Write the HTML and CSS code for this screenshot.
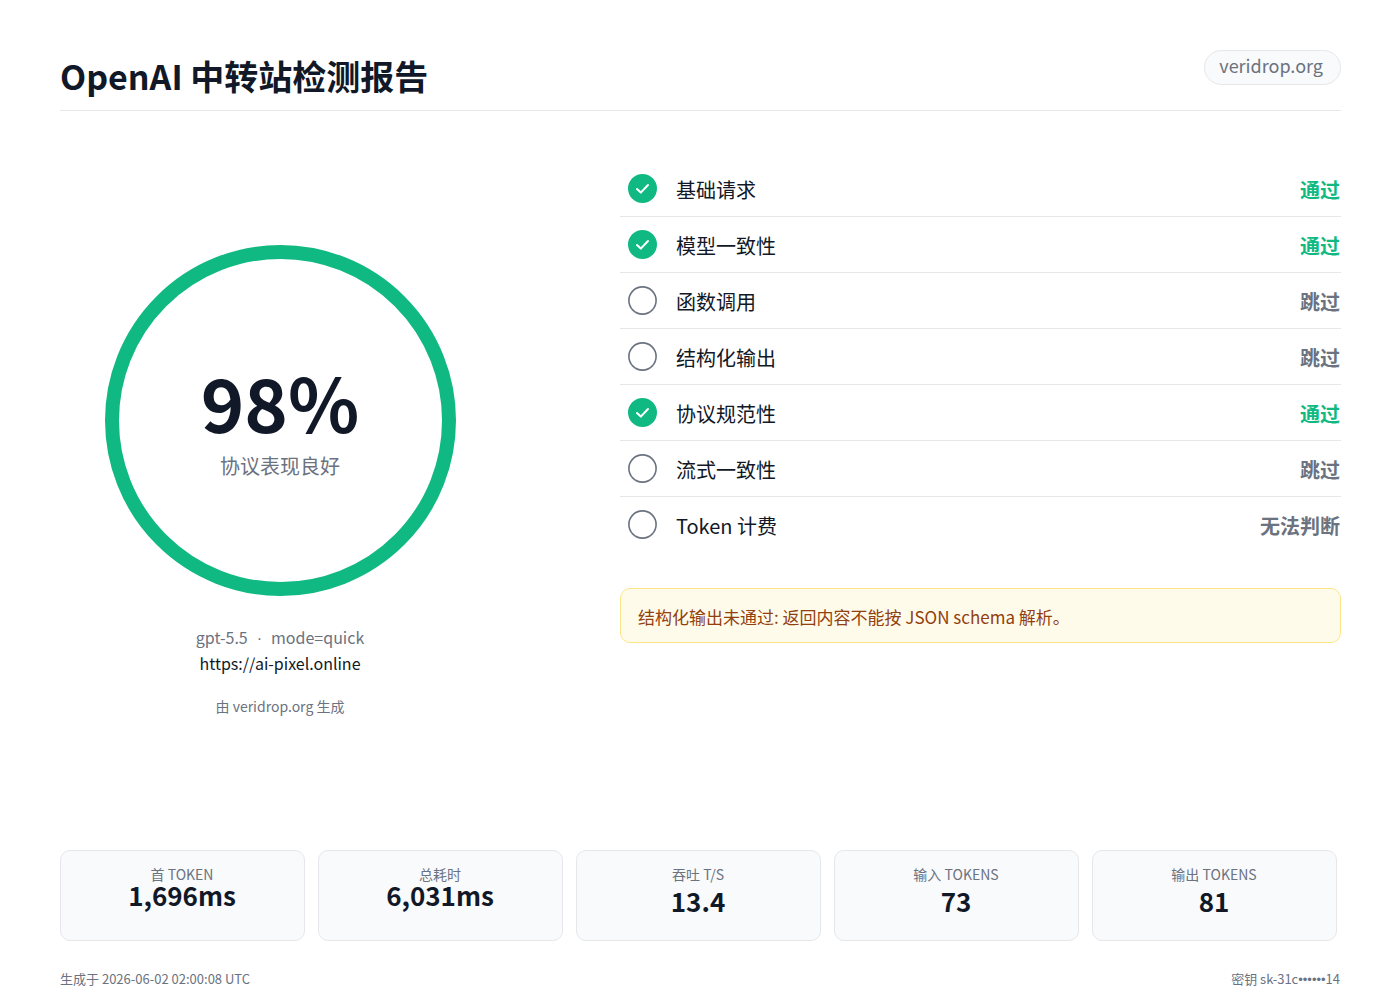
FILE: index.html
```html
<!DOCTYPE html>
<html>
<head>
    <title>OpenAI 中转站检测报告</title>
    <meta charset="utf-8">
    <link rel="stylesheet" href="styles.css">
</head>
<body>
    <div class="header">
        <h1>OpenAI 中转站检测报告</h1>
        <div class="brand">veridrop.org</div>
    </div>

    <div class="main">
        <div class="score-col">
            <div class="ring">
                <svg width="352" height="352" viewBox="0 0 352 352">
                    <circle cx="176.5" cy="175.5" r="168.5" fill="none" stroke="#10b981" stroke-width="14"/>
                </svg>
                <div class="ring-text">
                    <div class="score">98%</div>
                    <div class="score-label">协议表现良好</div>
                </div>
            </div>
            <div class="meta">gpt-5.5<span class="sep">·</span>mode=quick</div>
            <div class="url">https://ai-pixel.online</div>
            <div class="by">由 veridrop.org 生成</div>
        </div>

        <div class="check-col">
            <div class="check">
                <svg class="icon" viewBox="0 0 29 29"><circle cx="14.5" cy="14.5" r="14.5" fill="#10b981"/><path d="M9 15l3.8 3.6 7.2-7.6" fill="none" stroke="#fff" stroke-width="2" stroke-linecap="round" stroke-linejoin="round"/></svg>
                <span class="check-name">基础请求</span>
                <span class="status pass">通过</span>
            </div>
            <div class="check">
                <svg class="icon" viewBox="0 0 29 29"><circle cx="14.5" cy="14.5" r="14.5" fill="#10b981"/><path d="M9 15l3.8 3.6 7.2-7.6" fill="none" stroke="#fff" stroke-width="2" stroke-linecap="round" stroke-linejoin="round"/></svg>
                <span class="check-name">模型一致性</span>
                <span class="status pass">通过</span>
            </div>
            <div class="check">
                <svg class="icon" viewBox="0 0 29 29"><circle cx="14.5" cy="14.5" r="13.6" fill="none" stroke="#6b7280" stroke-width="1.6"/></svg>
                <span class="check-name">函数调用</span>
                <span class="status">跳过</span>
            </div>
            <div class="check">
                <svg class="icon" viewBox="0 0 29 29"><circle cx="14.5" cy="14.5" r="13.6" fill="none" stroke="#6b7280" stroke-width="1.6"/></svg>
                <span class="check-name">结构化输出</span>
                <span class="status">跳过</span>
            </div>
            <div class="check">
                <svg class="icon" viewBox="0 0 29 29"><circle cx="14.5" cy="14.5" r="14.5" fill="#10b981"/><path d="M9 15l3.8 3.6 7.2-7.6" fill="none" stroke="#fff" stroke-width="2" stroke-linecap="round" stroke-linejoin="round"/></svg>
                <span class="check-name">协议规范性</span>
                <span class="status pass">通过</span>
            </div>
            <div class="check">
                <svg class="icon" viewBox="0 0 29 29"><circle cx="14.5" cy="14.5" r="13.6" fill="none" stroke="#6b7280" stroke-width="1.6"/></svg>
                <span class="check-name">流式一致性</span>
                <span class="status">跳过</span>
            </div>
            <div class="check last">
                <svg class="icon" viewBox="0 0 29 29"><circle cx="14.5" cy="14.5" r="13.6" fill="none" stroke="#6b7280" stroke-width="1.6"/></svg>
                <span class="check-name">Token 计费</span>
                <span class="status">无法判断</span>
            </div>
            <div class="notice">结构化输出未通过: 返回内容不能按 JSON schema 解析。</div>
        </div>
    </div>

    <div class="stats">
        <div class="stat">
            <div class="stat-label">首 TOKEN</div>
            <div class="stat-value tight">1,696ms</div>
        </div>
        <div class="stat">
            <div class="stat-label">总耗时</div>
            <div class="stat-value tight">6,031ms</div>
        </div>
        <div class="stat">
            <div class="stat-label">吞吐 T/S</div>
            <div class="stat-value">13.4</div>
        </div>
        <div class="stat">
            <div class="stat-label">输入 TOKENS</div>
            <div class="stat-value">73</div>
        </div>
        <div class="stat">
            <div class="stat-label">输出 TOKENS</div>
            <div class="stat-value">81</div>
        </div>
    </div>

    <div class="footer">
        <span>生成于 2026-06-02 02:00:08 UTC</span>
        <span>密钥 sk-31c<span class="dots">••••••</span>14</span>
    </div>
</body>
</html>
```

FILE: styles.css
```css
html, body {
    margin: 0;
    height: 1000px;
    overflow: hidden;
}
body {
    font-family: "Noto Sans CJK SC", "Noto Sans", sans-serif;
    background: #fff;
    color: #111827;
    padding: 50px 59px 0 60px;
    box-sizing: border-box;
}
.header {
    display: flex;
    justify-content: space-between;
    align-items: flex-start;
    height: 60px;
    border-bottom: 1px solid #e5e7eb;
}
.header h1 {
    margin: 0;
    font-size: 34px;
    line-height: 52px;
    font-weight: 700;
}
.brand {
    height: 33px;
    line-height: 28px;
    padding: 0 17px 0 14px;
    font-size: 18px;
    color: #6b7280;
    background: #f9fafb;
    border: 1px solid #e5e7eb;
    border-radius: 18px;
}
.main {
    display: flex;
    height: 739px;
}
.score-col {
    width: 440px;
    padding-top: 134px;
    text-align: center;
}
.ring {
    position: relative;
    width: 352px;
    height: 352px;
    margin: 0 auto;
}
.ring svg {
    display: block;
}
.ring-text {
    position: absolute;
    left: 0;
    right: 0;
    top: 109px;
}
.score {
    font-size: 74px;
    line-height: 94px;
    font-weight: 700;
}
.score-label {
    font-size: 20px;
    line-height: 28px;
    color: #6b7280;
    margin-top: 4px;
}
.meta {
    margin-top: 27px;
    font-size: 16px;
    line-height: 26px;
    color: #6b7280;
}
.sep {
    font-family: "Liberation Sans", sans-serif;
    margin: 0 9px;
}
.url {
    font-size: 16px;
    line-height: 26px;
    margin-top: -2px;
}
.by {
    margin-top: 20px;
    font-size: 14px;
    line-height: 20px;
    color: #6b7280;
}
.check-col {
    width: 721px;
    margin-left: 120px;
    padding-top: 50px;
}
.check {
    display: flex;
    align-items: center;
    height: 55px;
    border-bottom: 1px solid #e5e7eb;
    padding: 0 1px 0 8px;
}
.check.last {
    border-bottom: none;
}
.check .icon {
    width: 29px;
    height: 29px;
    margin-top: -1px;
    flex: none;
}
.check-name {
    margin-left: 19px;
    font-size: 20px;
    line-height: 30px;
    padding-top: 2px;
    flex: 1;
}
.status {
    font-size: 20px;
    line-height: 30px;
    padding-top: 2px;
    font-weight: 700;
    color: #6b7280;
}
.status.pass {
    color: #10b981;
}
.notice {
    margin-top: 36px;
    height: 53px;
    line-height: 55px;
    padding: 0 17px;
    font-size: 17px;
    color: #92400e;
    background: #fffbeb;
    border: 1px solid #fde68a;
    border-radius: 10px;
}
.stats {
    display: grid;
    grid-template-columns: repeat(5, 245px);
    gap: 13px;
}
.stat {
    box-sizing: border-box;
    height: 91px;
    padding: 14px 1px 0 0;
    text-align: center;
    background: #f9fafb;
    border: 1px solid #e5e7eb;
    border-radius: 10px;
}
.stat-label {
    font-size: 14px;
    line-height: 18px;
    color: #6b7280;
}
.stat-value {
    font-size: 26px;
    line-height: 36px;
    font-weight: 700;
}
.stat-value.tight {
    line-height: 24px;
}
.footer {
    display: flex;
    justify-content: space-between;
    margin-top: 28px;
    padding-right: 1px;
    font-size: 13px;
    line-height: 20px;
    color: #6b7280;
}
.dots {
    font-family: "Liberation Sans", sans-serif;
}
```
